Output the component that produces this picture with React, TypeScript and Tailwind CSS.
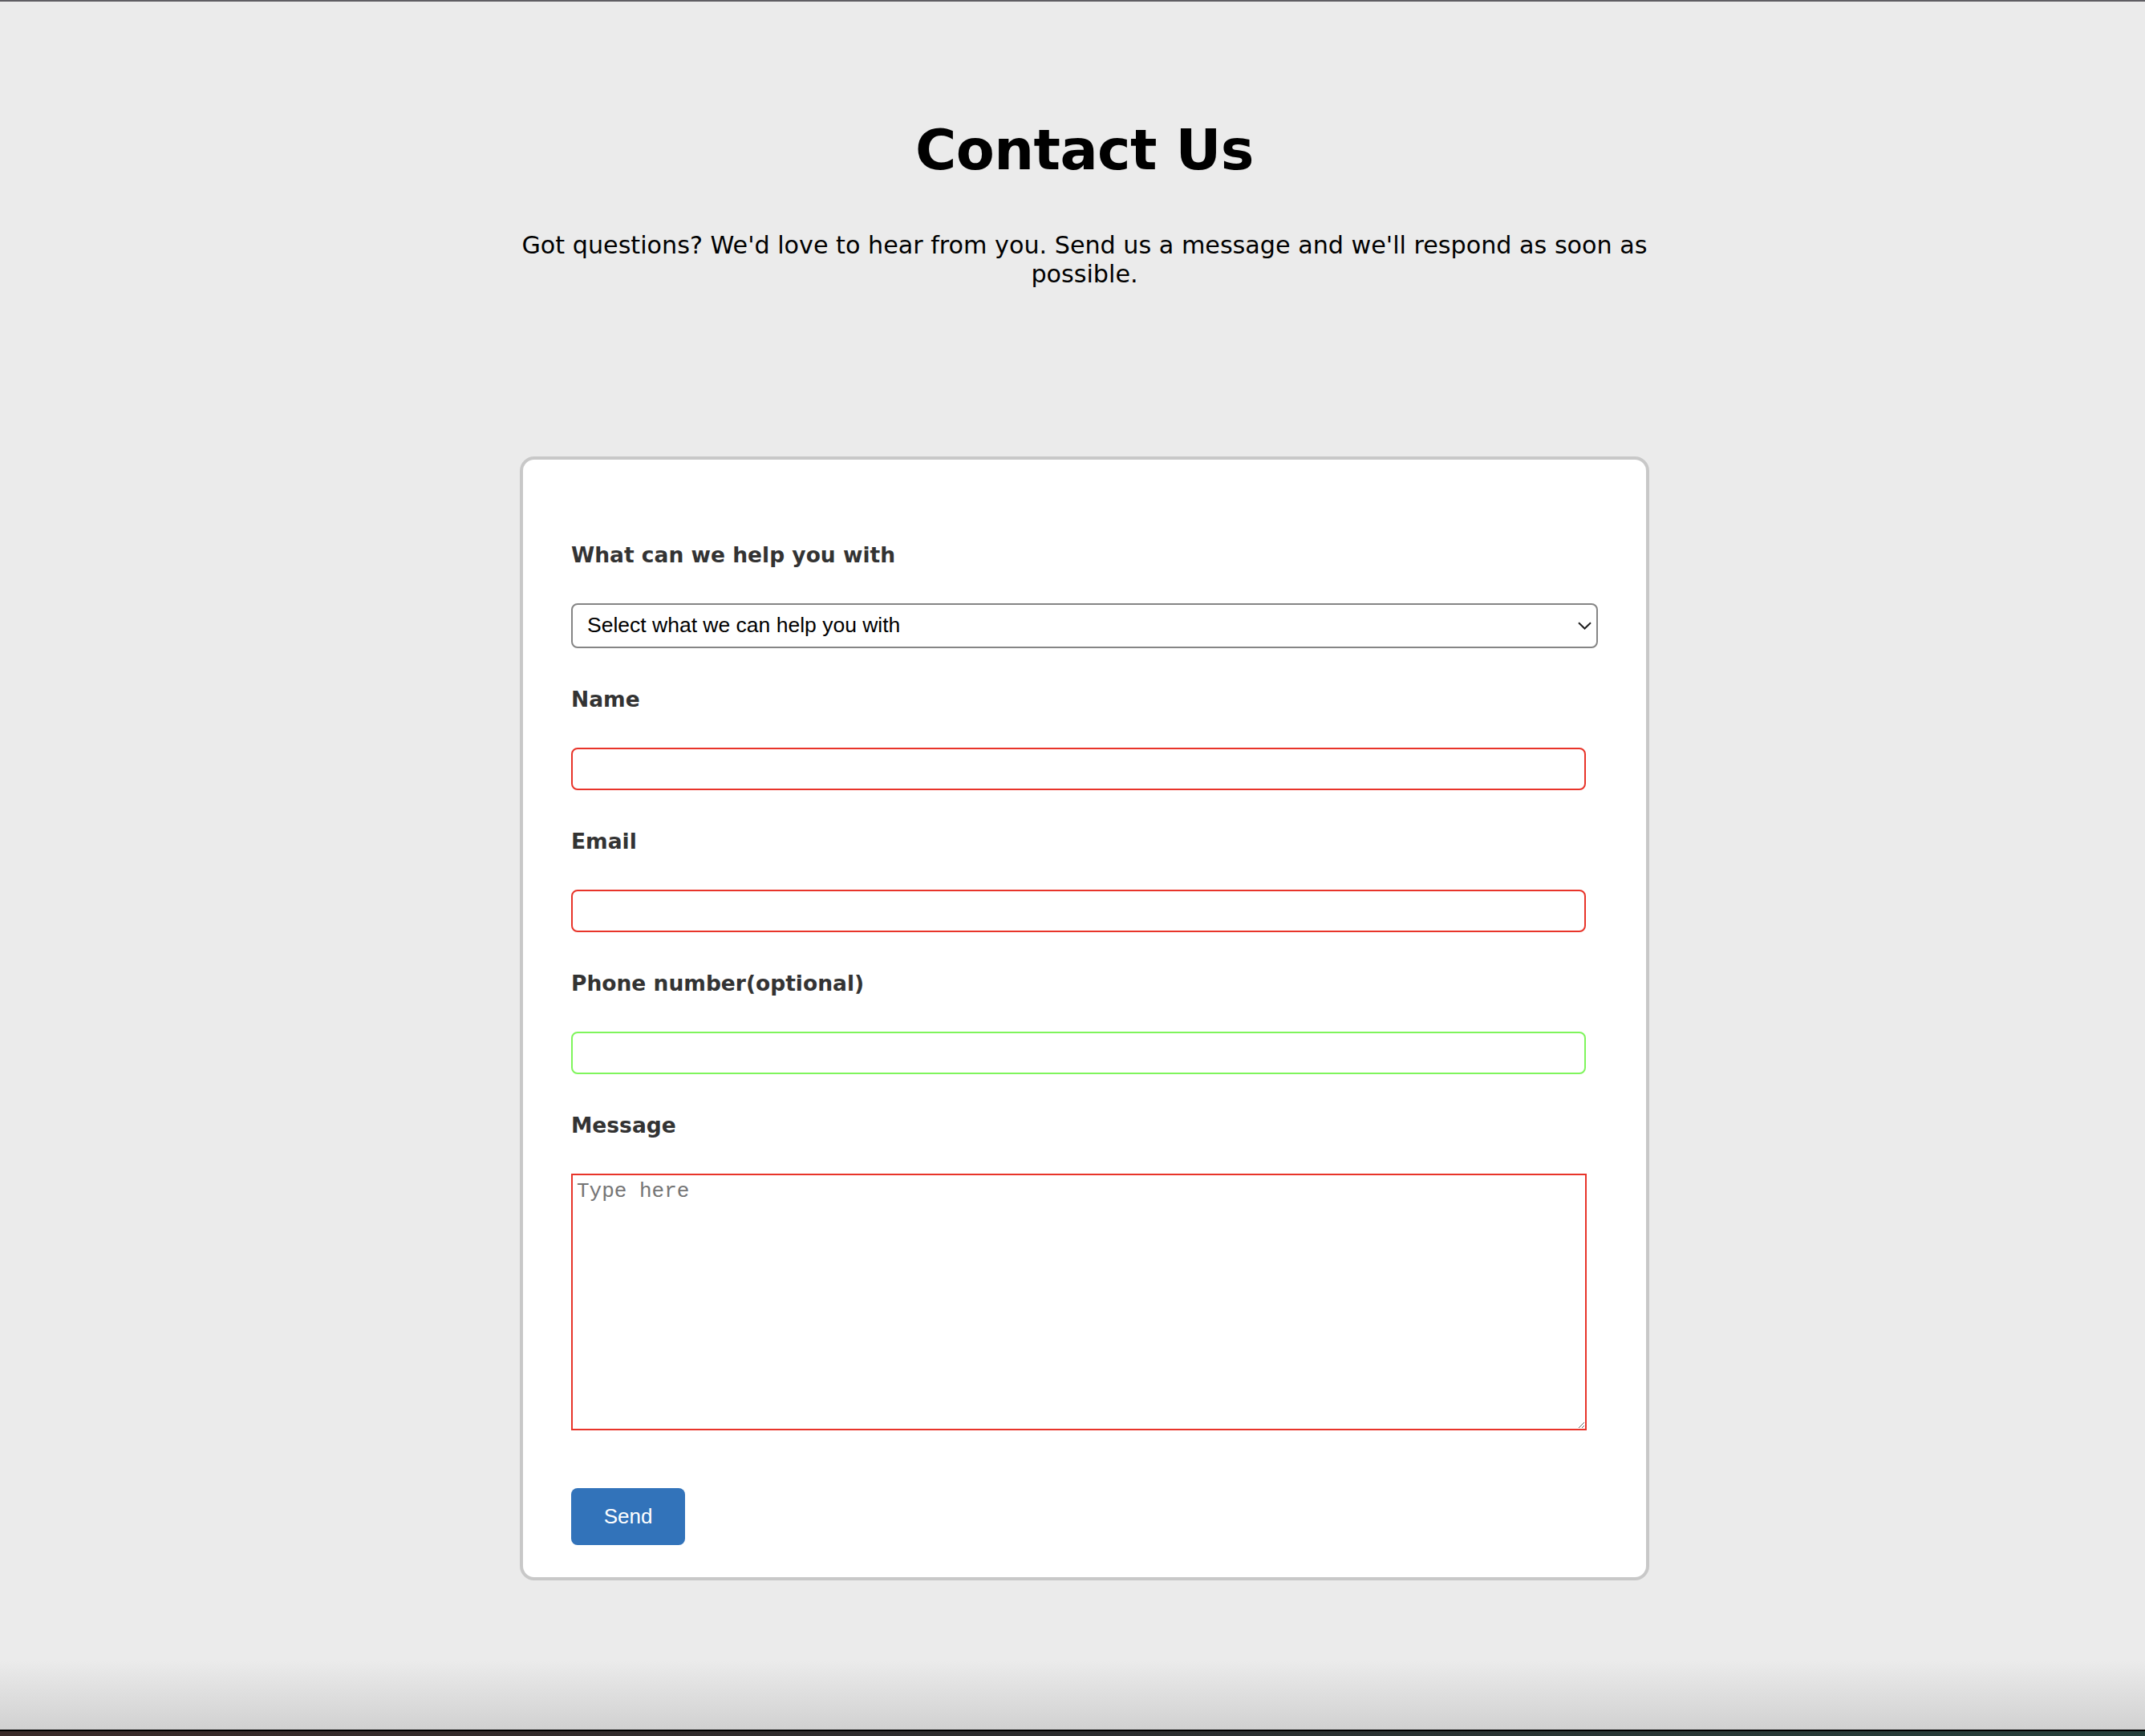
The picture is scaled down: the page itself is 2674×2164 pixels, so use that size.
import React from "react";

function Field({ label, children }: { label: string; children: React.ReactNode }) {
  return (
    <div className="flex flex-col">
      <label className="mb-[44px] block font-['DejaVu_Sans',sans-serif] text-[26.5px] leading-[32px] font-bold text-[#333333]">
        {label}
      </label>
      {children}
    </div>
  );
}

export default function App() {
  return (
    <div className="flex h-[2164px] w-full flex-col overflow-hidden bg-[#ebebeb]">
      <div className="h-[2px] shrink-0 bg-[#5f5e63]" />
      <main className="flex-1 pl-[30px]">
        <div className="mx-auto w-[1408px]">
          <h1 className="mt-[144px] text-center font-['DejaVu_Sans',sans-serif] text-[70px] leading-[82px] font-bold tracking-[-0.6px] text-black">
            Contact Us
          </h1>
          <p className="mt-[60px] text-center font-['DejaVu_Sans',sans-serif] text-[30.2px] leading-[36px] text-black">
            Got questions? We'd love to hear from you. Send us a message and we'll respond as soon as possible.
          </p>
          <form
            className="mt-[209px] flex flex-col gap-[48px] rounded-[18px] border-4 border-[#c8c8c8] bg-white px-[60px] pt-[103px] pb-[40px]"
            onSubmit={(e) => e.preventDefault()}
          >
            <Field label="What can we help you with">
              <div className="relative">
                <select
                  defaultValue=""
                  className="block h-[56px] w-full appearance-none rounded-[8px] border-2 border-[#858585] bg-white pl-[18px] font-['Liberation_Sans',Arial,sans-serif] text-[26.5px] text-black outline-none"
                >
                  <option value="">Select what we can help you with</option>
                  <option value="general">General inquiry</option>
                  <option value="support">Support</option>
                </select>
                <svg
                  className="pointer-events-none absolute top-[23px] right-[8px]"
                  width="17"
                  height="10"
                  viewBox="0 0 17 10"
                  fill="none"
                >
                  <path d="M1 1.2 L8.5 8.5 L16 1.2" stroke="#1f1f1f" strokeWidth="2" />
                </svg>
              </div>
            </Field>
            <Field label="Name">
              <input
                type="text"
                className="block h-[53px] w-[1265px] rounded-[8px] border-2 border-[#e8342a] bg-white outline-none"
              />
            </Field>
            <Field label="Email">
              <input
                type="email"
                className="block h-[53px] w-[1265px] rounded-[8px] border-2 border-[#e8342a] bg-white outline-none"
              />
            </Field>
            <Field label="Phone number(optional)">
              <input
                type="tel"
                className="block h-[53px] w-[1265px] rounded-[8px] border-2 border-[#7ff55c] bg-white outline-none"
              />
            </Field>
            <Field label="Message">
              <textarea
                placeholder="Type here"
                className="block h-[320px] w-[1266px] resize border-2 border-[#e8342a] bg-white p-[5px] font-['Liberation_Mono',monospace] text-[26px] leading-[30px] text-black outline-none placeholder:text-[#757575]"
              />
            </Field>
            <div className="mt-[24px]">
              <button
                type="submit"
                className="h-[71px] w-[142px] rounded-[8px] bg-[#3273ba] font-['Liberation_Sans',Arial,sans-serif] text-[26px] text-white"
              >
                Send
              </button>
            </div>
          </form>
        </div>
      </main>
      <div className="h-[86px] shrink-0 bg-gradient-to-b from-[#ebebeb] to-[#d1d1d1]" />
      <div className="h-[8px] shrink-0 border-t-2 border-black bg-gradient-to-r from-[#3a2b29] via-[#2b2c2e] to-[#25403b]" />
    </div>
  );
}
